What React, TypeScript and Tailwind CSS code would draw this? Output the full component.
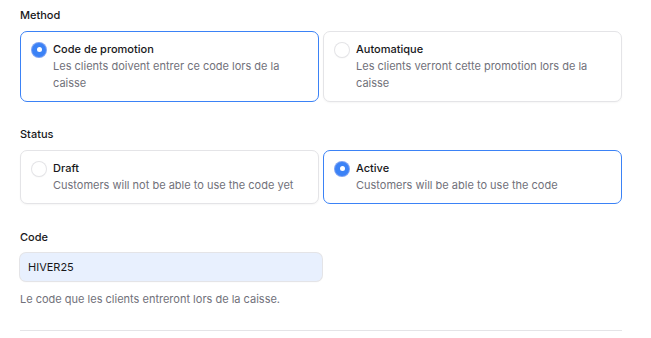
import React from "react";

interface Option {
  title: string;
  description: string;
}

function Radio({ checked }: { checked: boolean }) {
  if (checked) {
    return (
      <span className="mt-[1.5px] flex h-[14px] w-[14px] shrink-0 items-center justify-center rounded-full bg-[#3b82f6] shadow-[0_0_0_1px_rgba(37,99,235,0.6)]">
        <span className="h-[5px] w-[5px] rounded-full bg-white" />
      </span>
    );
  }
  return (
    <span className="mt-[1.5px] h-[14px] w-[14px] shrink-0 rounded-full bg-white shadow-[0_0_0_1px_#e4e4e7,0_1px_2px_rgba(0,0,0,0.08)]" />
  );
}

function RadioCard({ option, checked }: { option: Option; checked: boolean }) {
  return (
    <div
      className={
        "flex items-start gap-[7px] rounded-[7px] border bg-white px-[11px] py-[9px] " +
        (checked ? "border-[#3b82f6]" : "border-[#e4e4e7] shadow-[0_1px_2px_rgba(0,0,0,0.04)]")
      }
    >
      <Radio checked={checked} />
      <div className="flex flex-col">
        <span className="text-[11px] font-medium leading-[17px] text-[#18181b]">{option.title}</span>
        <span className="text-[11px] leading-[17px] text-[#71717a]">{option.description}</span>
      </div>
    </div>
  );
}

export default function App() {
  const methods: Option[] = [
    { title: "Code de promotion", description: "Les clients doivent entrer ce code lors de la caisse" },
    { title: "Automatique", description: "Les clients verront cette promotion lors de la caisse" },
  ];
  const statuses: Option[] = [
    { title: "Draft", description: "Customers will not be able to use the code yet" },
    { title: "Active", description: "Customers will be able to use the code" },
  ];

  return (
    <div className="min-h-[338px] bg-white pl-[20px] pt-[7px] font-['Inter',sans-serif]">
      <div className="w-[602px]">
        <div className="flex flex-col gap-[7px]">
          <span className="text-[11px] font-medium leading-[17px] text-[#18181b]">Method</span>
          <div className="grid grid-cols-2 gap-1">
            <RadioCard option={methods[0]} checked />
            <RadioCard option={methods[1]} checked={false} />
          </div>
        </div>

        <div className="mt-[24px] flex flex-col gap-[7px]">
          <span className="text-[11px] font-medium leading-[17px] text-[#18181b]">Status</span>
          <div className="grid grid-cols-2 gap-1">
            <RadioCard option={statuses[0]} checked={false} />
            <RadioCard option={statuses[1]} checked />
          </div>
        </div>

        <div className="mt-[25px] flex flex-col">
          <span className="text-[11px] font-medium leading-[17px] text-[#18181b]">Code</span>
          <input
            readOnly
            value="HIVER25"
            className="mt-[7px] h-[28px] w-[302px] rounded-[6px] bg-[#e8f0fe] px-[8px] text-[11px] text-[#18181b] shadow-[0_0_0_1px_#e4e4e7,0_1px_2px_rgba(0,0,0,0.06)] outline-none"
          />
          <span className="mt-[10px] text-[11px] leading-[17px] text-[#71717a]">
            Le code que les clients entreront lors de la caisse.
          </span>
        </div>

        <div className="mt-[22px] h-px w-full bg-[#e4e4e7]" />
      </div>
    </div>
  );
}
